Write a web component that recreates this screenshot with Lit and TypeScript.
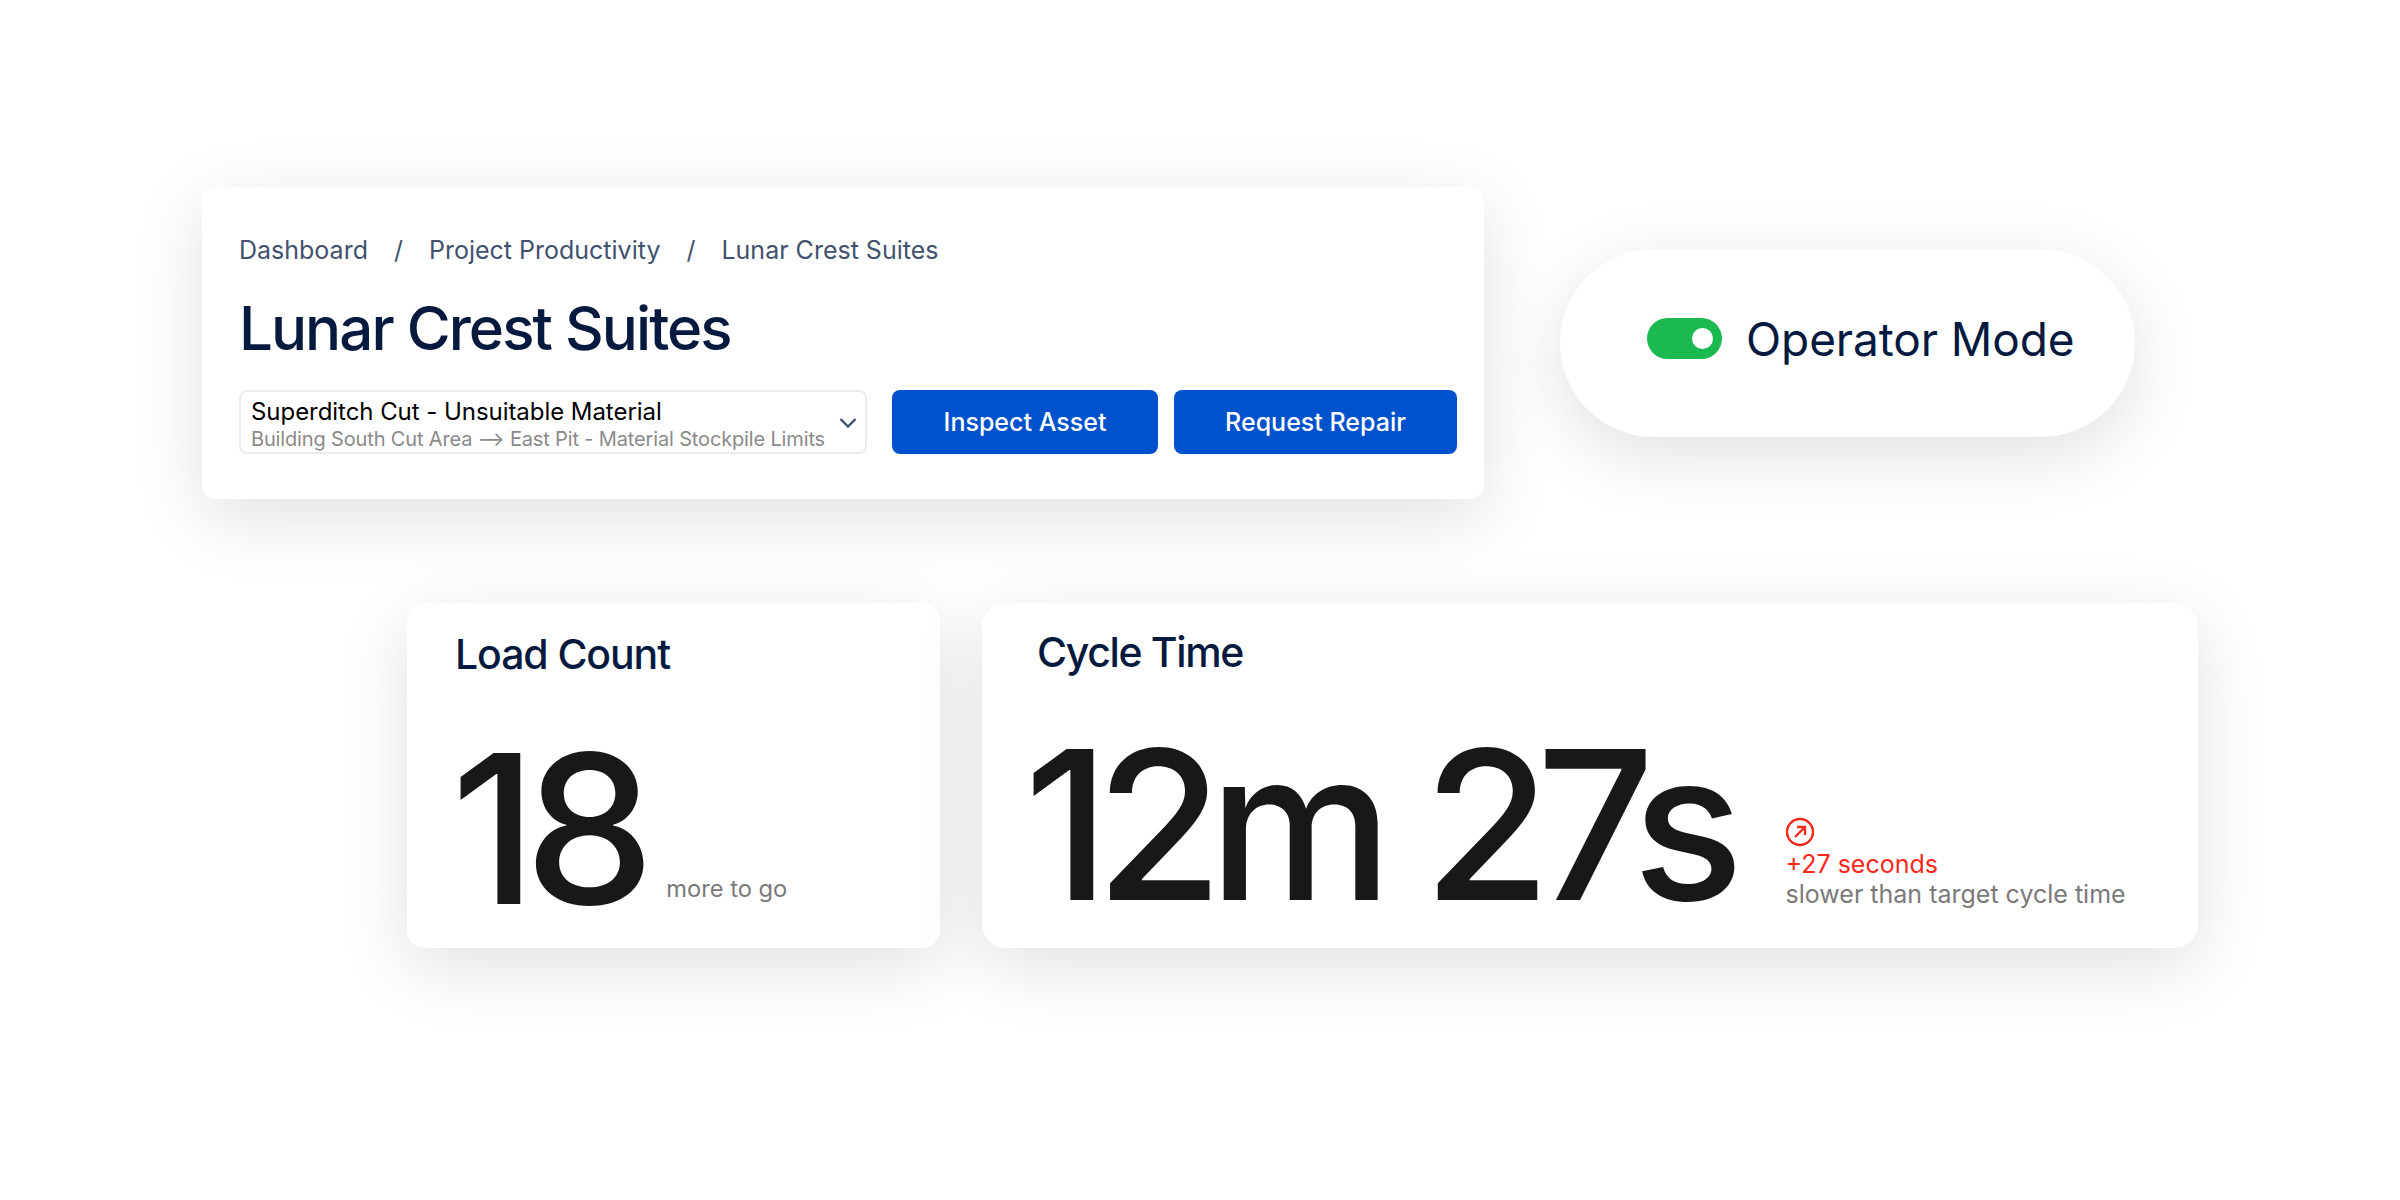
import { html, css, LitElement } from 'lit';
import { customElement } from 'lit/decorators.js';

@customElement('app-root')
export class AppRoot extends LitElement {
  static styles = css`
    :host {
      display: block;
      height: 1200px;
      background: #fff;
      font-family: Inter, "Liberation Sans", sans-serif;
      overflow: hidden;
    }

    .page {
      display: flex;
      flex-direction: column;
      gap: 104px;
      padding: 187px 0 0 202px;
    }

    .row {
      display: flex;
      align-items: flex-start;
    }

    .card {
      box-sizing: border-box;
      background: #fff;
      border-radius: 14px;
      box-shadow: 0 18px 70px rgba(0, 0, 0, 0.12);
    }

    /* header card */
    .header {
      width: 1282px;
      height: 312px;
      padding: 47px 27px 0 37px;
    }

    .crumbs {
      display: flex;
      gap: 26px;
      font-size: 25px;
      line-height: 32px;
      color: #42526e;
    }

    h1 {
      margin: 26px 0 0;
      font-size: 60px;
      line-height: 72px;
      font-weight: 500;
      letter-spacing: -1.95px;
      color: #051a3e;
    }

    .controls {
      display: flex;
      margin-top: 26px;
      height: 64px;
    }

    .select {
      box-sizing: border-box;
      width: 628px;
      display: flex;
      align-items: flex-start;
      justify-content: space-between;
      padding: 6px 8px 0 10px;
      border: 2px solid #ebecf0;
      border-radius: 8px;
      margin-right: 25px;
    }

    .select svg {
      align-self: center;
      margin-top: -5px;
    }

    .select-title {
      font-size: 24px;
      line-height: 28px;
      letter-spacing: -0.05px;
      color: #000;
    }

    .select-sub {
      font-size: 20px;
      line-height: 27px;
      letter-spacing: -0.15px;
      color: #8a8a8a;
      white-space: nowrap;
    }

    button {
      height: 64px;
      border: 0;
      border-radius: 8px;
      background: #0052cc;
      color: #fff;
      font-family: inherit;
      font-size: 25px;
      font-weight: 500;
      padding: 0;
    }

    .inspect {
      width: 266px;
      margin-right: 16px;
    }

    .repair {
      width: 283px;
    }

    /* operator pill */
    .pill {
      margin: 62px 0 0 76px;
      width: 575px;
      height: 188px;
      border-radius: 94px;
      display: flex;
      align-items: center;
      gap: 24px;
      padding: 0 0 9px 87px;
    }

    .toggle {
      box-sizing: border-box;
      width: 75px;
      height: 41px;
      border-radius: 21px;
      background: #1bb94f;
      display: flex;
      justify-content: flex-end;
      align-items: center;
      padding-right: 9px;
    }

    .knob {
      width: 21px;
      height: 21px;
      border-radius: 50%;
      background: #fff;
    }

    .pill-label {
      font-size: 46px;
      letter-spacing: -0.1px;
      color: #051a3e;
    }

    /* stats */
    .stats {
      margin-left: 205px;
      gap: 42px;
    }

    .stat {
      height: 345px;
    }

    .load {
      width: 533px;
      border-radius: 18px;
      padding: 26px 0 0 48px;
    }

    .cycle {
      width: 1216px;
      border-radius: 24px;
      padding: 24px 0 0 55px;
    }

    h2 {
      margin: 0;
      font-size: 41px;
      line-height: 50px;
      font-weight: 500;
      letter-spacing: -1.1px;
      color: #051a3e;
    }

    .cycle h2 {
      letter-spacing: -1.35px;
    }

    .stat-body {
      display: flex;
      align-items: flex-end;
    }

    .big {
      font-size: 207px;
      line-height: 250px;
      font-weight: 470;
      color: #16181a;
      white-space: nowrap;
    }

    .note {
      font-size: 25px;
      line-height: 30px;
      color: #7a7a7a;
      white-space: nowrap;
    }

    .delta {
      color: #f5291c;
    }

    .load .stat-body {
      margin-top: 25px;
      gap: 24px;
    }

    .load .big {
      margin-left: -4px;
      letter-spacing: -12.5px;
    }

    .load .note {
      font-size: 23.7px;
      margin-bottom: 50px;
    }

    .cycle .stat-body {
      margin-top: 23px;
      gap: 56px;
    }

    .cycle .big {
      margin-left: -13px;
      letter-spacing: -14.3px;
      word-spacing: 4px;
    }

    .detail {
      display: flex;
      flex-direction: column;
      margin-bottom: 41px;
    }

    .detail svg {
      display: block;
      margin: 0 0 2px -1px;
    }
  `;

  render() {
    return html`
      <div class="page">
        <div class="row">
          <section class="card header">
            <nav class="crumbs">
              <span>Dashboard</span><span>/</span>
              <span>Project Productivity</span><span>/</span>
              <span>Lunar Crest Suites</span>
            </nav>
            <h1>Lunar Crest Suites</h1>
            <div class="controls">
              <div class="select">
                <div>
                  <div class="select-title">Superditch Cut - Unsuitable Material</div>
                  <div class="select-sub">Building South Cut Area ⟶ East Pit - Material Stockpile Limits</div>
                </div>
                <svg width="18" height="12" viewBox="0 0 18 12" fill="none" stroke="#42526e" stroke-width="2.4">
                  <path d="M1.5 2 L9 9.5 L16.5 2" />
                </svg>
              </div>
              <button class="inspect">Inspect Asset</button>
              <button class="repair">Request Repair</button>
            </div>
          </section>
          <section class="card pill">
            <div class="toggle"><div class="knob"></div></div>
            <span class="pill-label">Operator Mode</span>
          </section>
        </div>
        <div class="row stats">
          <section class="card stat load">
            <h2>Load Count</h2>
            <div class="stat-body">
              <div class="big">18</div>
              <div class="note">more to go</div>
            </div>
          </section>
          <section class="card stat cycle">
            <h2>Cycle Time</h2>
            <div class="stat-body">
              <div class="big">12m 27s</div>
              <div class="note detail">
                <svg width="30" height="30" viewBox="0 0 30 30" fill="none" stroke="#f5291c" stroke-width="2.4">
                  <circle cx="15" cy="15" r="13" />
                  <path d="M10 20 L20 10 M12 10 H20 V18" />
                </svg>
                <span class="delta">+27 seconds</span>
                <span>slower than target cycle time</span>
              </div>
            </div>
          </section>
        </div>
      </div>
    `;
  }
}
